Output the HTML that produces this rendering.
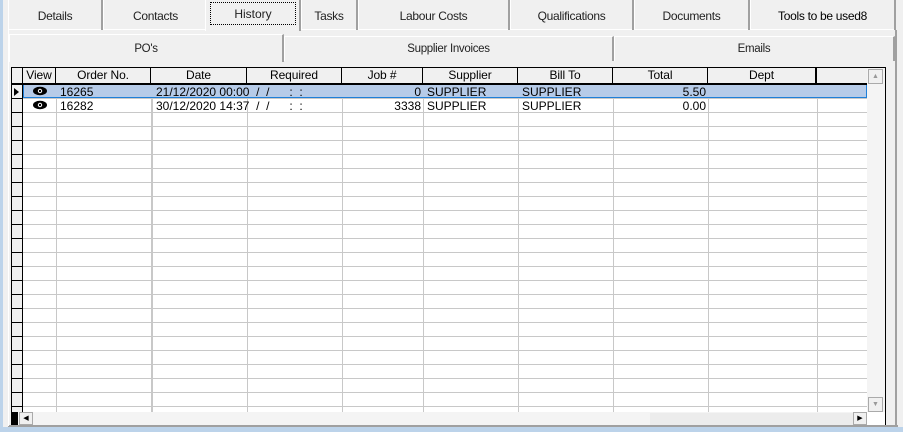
<!DOCTYPE html><html><head><style>
*{margin:0;padding:0;box-sizing:border-box}
body{width:903px;height:432px;background:#f0f0f0;position:relative;overflow:hidden;font-family:"Liberation Sans",sans-serif;font-size:12px;color:#000}
.a{position:absolute}
.tab{position:absolute;top:0;height:30px;border-right:2px solid #a0a0a0;border-left:1px solid #fff;text-align:center;line-height:32px;font-size:12px;color:#222;letter-spacing:-0.3px}
.t2{position:absolute;top:34px;height:28px;border-right:2px solid #a0a0a0;border-left:1px solid #fff;border-top:1px solid #fff;text-align:center;line-height:28px;font-size:11.5px;color:#222;letter-spacing:-0.3px}
.hd{position:absolute;top:68px;height:17px;border-right:1px solid #000;border-bottom:2px solid #000;text-align:center;font-size:12px;line-height:15px;letter-spacing:-0.1px;background:#f0f0f0}
.vl{position:absolute;top:85px;height:327px;width:1px;background:#c8c8c8}
.c{position:absolute;font-size:12px;line-height:14px;white-space:pre}
</style></head><body>
<div class="a" style="left:0;top:0;width:3px;height:432px;background:#bcd3ea"></div>
<div class="a" style="left:0;top:427px;width:903px;height:5px;background:#bcd3ea"></div>
<div class="a" style="left:8px;top:425px;width:890px;height:2px;background:#a0a0a0"></div>
<div class="a" style="left:8px;top:30px;width:1px;height:396px;background:#fff"></div>
<div class="a" style="left:895px;top:30px;width:2px;height:396px;background:#a0a0a0"></div>
<div class="a" style="left:8px;top:29px;width:888px;height:1px;background:#fff"></div>
<div class="tab" style="left:8px;width:95px">Details</div>
<div class="tab" style="left:103px;width:106px">Contacts</div>
<div class="a" style="left:205px;top:0;width:96px;height:31px;background:#f0f0f0;border-left:1px solid #fff;border-right:2px solid #a0a0a0"></div>
<div class="a" style="left:210px;top:2px;width:86px;height:23px;border:1px dotted #000;text-align:center;line-height:22px;color:#222">History</div>
<div class="tab" style="left:301px;width:57px">Tasks</div>
<div class="tab" style="left:358px;width:152px">Labour Costs</div>
<div class="tab" style="left:510px;width:124px">Qualifications</div>
<div class="tab" style="left:634px;width:116px">Documents</div>
<div class="tab" style="left:750px;width:146px;color:#000">Tools to be used8</div>
<div class="t2" style="left:9px;width:275px">PO's</div>
<div class="t2" style="left:284px;width:330px;top:36px;height:25px;line-height:25px">Supplier Invoices</div>
<div class="t2" style="left:614px;width:281px;top:36px;height:25px;line-height:25px">Emails</div>
<div class="a" style="left:11px;top:67px;width:875px;height:358px;border:1px solid #000;border-bottom:none;background:#fff"></div>
<div class="a" style="left:12px;top:85px;width:855px;height:327px;background-image:repeating-linear-gradient(to bottom,transparent 0,transparent 13px,#c8c8c8 13px,#c8c8c8 14px)"></div>
<div class="a" style="left:12px;top:85px;width:11px;height:327px;background:#f0f0f0;border-right:1px solid #000;background-image:repeating-linear-gradient(to bottom,transparent 0,transparent 13px,#000 13px,#000 14px)"></div>
<div class="hd" style="left:12px;width:11px"></div>
<div class="hd" style="left:23px;width:33px">View</div>
<div class="hd" style="left:56px;width:95px">Order No.</div>
<div class="hd" style="left:151px;width:96px">Date</div>
<div class="hd" style="left:247px;width:95px">Required</div>
<div class="hd" style="left:342px;width:81px">Job #</div>
<div class="hd" style="left:423px;width:95px">Supplier</div>
<div class="hd" style="left:518px;width:95px">Bill To</div>
<div class="hd" style="left:613px;width:95px">Total</div>
<div class="hd" style="left:708px;width:109px;border-right-width:2px">Dept</div>
<div class="hd" style="left:817px;width:50px;border-right:none"></div>
<div class="vl" style="left:56px"></div><div class="vl" style="left:151px;width:2px"></div><div class="vl" style="left:247px"></div><div class="vl" style="left:342px"></div><div class="vl" style="left:423px"></div><div class="vl" style="left:518px"></div><div class="vl" style="left:613px"></div><div class="vl" style="left:708px"></div><div class="vl" style="left:817px"></div>
<div class="a" style="left:23px;top:85px;width:844px;height:13px;background:#b6cbe8;border:1px solid #1e7fd8;border-top:none"></div>
<div class="a" style="left:14px;top:88px;width:0;height:0;border-left:5px solid #000;border-top:4px solid transparent;border-bottom:4px solid transparent"></div>
<svg class="a" style="left:32px;top:86px" width="16" height="26"><ellipse cx="8" cy="5" rx="7" ry="4.2" fill="#000"/><circle cx="8" cy="5" r="2.2" fill="#fff"/><circle cx="8" cy="5" r="1.2" fill="#000"/><ellipse cx="8" cy="19" rx="7" ry="4.2" fill="#000"/><circle cx="8" cy="19" r="2.2" fill="#fff"/><circle cx="8" cy="19" r="1.2" fill="#000"/></svg>
<div class="c" style="left:60px;top:85px">16265</div><div class="c" style="left:60px;top:99px">16282</div>
<div class="c" style="left:156px;top:85px">21/12/2020 00:00  /  /      :  :</div>
<div class="c" style="left:156px;top:99px">30/12/2020 14:37  /  /      :  :</div>
<div class="c" style="left:342px;top:85px;width:79px;text-align:right">0</div>
<div class="c" style="left:342px;top:99px;width:79px;text-align:right">3338</div>
<div class="c" style="left:427px;top:85px">SUPPLIER</div><div class="c" style="left:427px;top:99px">SUPPLIER</div>
<div class="c" style="left:522px;top:85px">SUPPLIER</div><div class="c" style="left:522px;top:99px">SUPPLIER</div>
<div class="c" style="left:613px;top:85px;width:93px;text-align:right">5.50</div>
<div class="c" style="left:613px;top:99px;width:93px;text-align:right">0.00</div>
<div class="a" style="left:867px;top:68px;width:18px;height:344px;background:#f4f4f4"></div>
<div class="a" style="left:868px;top:69px;width:15px;height:15px;background:#f0f0f0;border:1px solid #aaa;color:#999;font-size:7px;text-align:center;line-height:13px">▲</div>
<div class="a" style="left:868px;top:397px;width:15px;height:15px;background:#f0f0f0;border:1px solid #aaa;color:#999;font-size:7px;text-align:center;line-height:13px">▼</div>
<div class="a" style="left:12px;top:412px;width:855px;height:13px;background:#f4f4f4"></div>
<div class="a" style="left:12px;top:412px;width:6px;height:13px;background:#000"></div>
<div class="a" style="left:19px;top:412px;width:14px;height:13px;background:#f0f0f0;border:1px solid #aaa;font-size:7px;text-align:center;line-height:11px">◀</div>
<div class="a" style="left:650px;top:413px;width:203px;height:12px;background:#ececec"></div>
<div class="a" style="left:853px;top:412px;width:14px;height:13px;background:#f0f0f0;border:1px solid #aaa;font-size:7px;text-align:center;line-height:11px">▶</div>
</body></html>
